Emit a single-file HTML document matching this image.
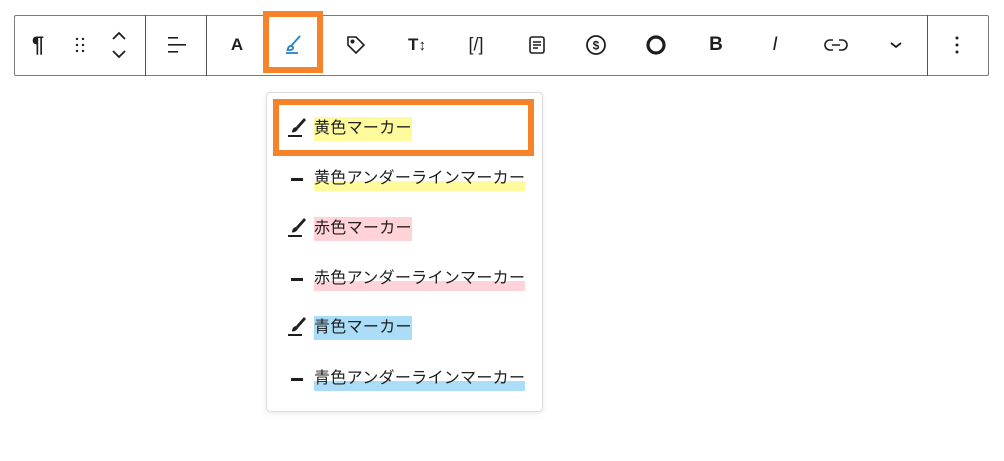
<!DOCTYPE html>
<html><head><meta charset="utf-8"><style>
*{margin:0;padding:0;box-sizing:border-box}
body{width:1004px;height:461px;background:#fff;position:relative;overflow:hidden;font-family:"Liberation Sans","Noto Sans CJK JP",sans-serif;color:#1e1e1e}
.tb{position:absolute;left:14px;top:15px;width:975px;height:61px;border:1.5px solid #7a7a7a;border-radius:2px}
.div{position:absolute;top:15px;width:1px;height:61px;background:#555}
.ic{position:absolute;top:45px;transform:translate(-50%,-50%)}
.ob{position:absolute;border:6px solid #f6822a}
.menu{position:absolute;left:266px;top:92px;width:277px;height:320px;border:1px solid #ddd;border-radius:4px;box-shadow:0 2px 6px rgba(0,0,0,.08);background:#fff}
.it{position:absolute;left:314px;font-size:16px;line-height:24px;white-space:nowrap;letter-spacing:0.3px}
.y{background:#fffb9d}.p{background:#ffd3d8}.b{background:#abdcf8}
.uy{background:linear-gradient(transparent 58%,#fffb9d 58%)}
.up{background:linear-gradient(transparent 58%,#ffd3d8 58%)}
.ub{background:linear-gradient(transparent 58%,#abdcf8 58%)}
.dash{position:absolute;left:291px;width:12px;height:2.5px;background:#1e1e1e}
</style></head><body>
<div class="tb"></div>
<div class="div" style="left:145px"></div>
<div class="div" style="left:206px"></div>
<div class="div" style="left:927px"></div>

<div class="ic" style="left:38px;font-size:22px;font-weight:bold">¶</div>
<svg class="ic" style="left:80px" width="12" height="18" viewBox="0 0 12 18" fill="#1e1e1e"><circle cx="3" cy="3" r="1.2"/><circle cx="9" cy="3" r="1.2"/><circle cx="3" cy="9" r="1.2"/><circle cx="9" cy="9" r="1.2"/><circle cx="3" cy="15" r="1.2"/><circle cx="9" cy="15" r="1.2"/></svg>
<svg class="ic" style="left:119px" width="16" height="30" viewBox="0 0 16 30" fill="none" stroke="#1e1e1e" stroke-width="1.8"><path d="M2 9l6-6 6 6M2 21l6 6 6-6"/></svg>
<svg class="ic" style="left:176px" width="22" height="20" viewBox="0 0 22 20" fill="#1e1e1e"><rect x="3" y="2" width="10" height="1.6"/><rect x="3" y="9" width="18" height="1.6"/><rect x="3" y="16" width="10" height="1.6"/></svg>
<div class="ic" style="left:237px;font-size:17px;font-weight:bold">A</div>
<svg class="ic" style="left:293px" width="20" height="22" viewBox="0 0 20 22" fill="none" stroke="#2a80c4" stroke-width="1.8"><path d="M17 2L8 12M8 12c-2 0-3 1.5-3.5 4h3.5c1.5-.5 2.5-1.5 2-3z"/><path d="M3 19h12"/></svg>
<svg class="ic" style="left:356px" width="22" height="22" viewBox="0 0 22 22" fill="none" stroke="#1e1e1e" stroke-width="1.6"><path d="M3 3h8l8 8-8 8-8-8z"/><circle cx="7.5" cy="7.5" r="1.2" fill="#1e1e1e"/></svg>
<div class="ic" style="left:417px;font-size:17px;font-weight:bold;font-family:'Liberation Sans',sans-serif">T<span style="font-size:15px">↕</span></div>
<div class="ic" style="left:476px;font-size:18px;font-family:'Liberation Sans',sans-serif">[/]</div>
<svg class="ic" style="left:537px" width="18" height="20" viewBox="0 0 18 20" fill="none" stroke="#1e1e1e" stroke-width="1.6"><rect x="2" y="2" width="14" height="16" rx="2"/><path d="M5 7h8M5 10h8M5 13h5"/></svg>
<svg class="ic" style="left:596px" width="22" height="22" viewBox="0 0 22 22"><circle cx="11" cy="11" r="9" fill="none" stroke="#1e1e1e" stroke-width="1.8"/><text x="11" y="15.5" text-anchor="middle" font-size="12" font-weight="bold" font-family="Liberation Sans" fill="#1e1e1e">$</text></svg>
<svg class="ic" style="left:656px" width="22" height="22" viewBox="0 0 22 22"><circle cx="11" cy="11" r="8" fill="none" stroke="#1e1e1e" stroke-width="3.2"/></svg>
<div class="ic" style="left:716px;font-size:19px;font-weight:bold">B</div>
<div class="ic" style="left:775px;font-size:19px;font-style:italic;font-family:'Liberation Sans',sans-serif">I</div>
<svg class="ic" style="left:836px" width="24" height="14" viewBox="0 0 24 14" fill="none" stroke="#1e1e1e" stroke-width="1.6"><path d="M9 2H6a5 5 0 000 10h3M15 2h3a5 5 0 010 10h-3M8 7h8"/></svg>
<svg class="ic" style="left:896px" width="14" height="10" viewBox="0 0 14 10" fill="none" stroke="#1e1e1e" stroke-width="1.8"><path d="M2 3l5 4 5-4"/></svg>
<svg class="ic" style="left:957px" width="6" height="20" viewBox="0 0 6 20" fill="#1e1e1e"><circle cx="3" cy="3" r="1.5"/><circle cx="3" cy="10" r="1.5"/><circle cx="3" cy="17" r="1.5"/></svg>

<div class="ob" style="left:263px;top:11px;width:60px;height:62px"></div>

<div class="menu"></div>
<div class="ob" style="left:273px;top:99px;width:261px;height:57px"></div>

<svg style="position:absolute;left:287px;top:117px" width="20" height="21" viewBox="0 0 20 21" fill="#1e1e1e"><path d="M17 1l2 2-8 9-2-2z"/><path d="M9 10l2 2c-1 2-3 3.5-6 3.5 0-3 1.5-5 4-5.5z"/><rect x="1" y="18" width="14" height="2"/></svg>
<div class="it y" style="top:117px">黄色マーカー</div>
<div class="dash" style="top:178px"></div>
<div class="it uy" style="top:167px">黄色アンダーラインマーカー</div>
<svg style="position:absolute;left:287px;top:217px" width="20" height="21" viewBox="0 0 20 21" fill="#1e1e1e"><path d="M17 1l2 2-8 9-2-2z"/><path d="M9 10l2 2c-1 2-3 3.5-6 3.5 0-3 1.5-5 4-5.5z"/><rect x="1" y="18" width="14" height="2"/></svg>
<div class="it p" style="top:217px">赤色マーカー</div>
<div class="dash" style="top:278px"></div>
<div class="it up" style="top:267px">赤色アンダーラインマーカー</div>
<svg style="position:absolute;left:287px;top:316px" width="20" height="21" viewBox="0 0 20 21" fill="#1e1e1e"><path d="M17 1l2 2-8 9-2-2z"/><path d="M9 10l2 2c-1 2-3 3.5-6 3.5 0-3 1.5-5 4-5.5z"/><rect x="1" y="18" width="14" height="2"/></svg>
<div class="it b" style="top:316px">青色マーカー</div>
<div class="dash" style="top:378px"></div>
<div class="it ub" style="top:367px">青色アンダーラインマーカー</div>
</body></html>
